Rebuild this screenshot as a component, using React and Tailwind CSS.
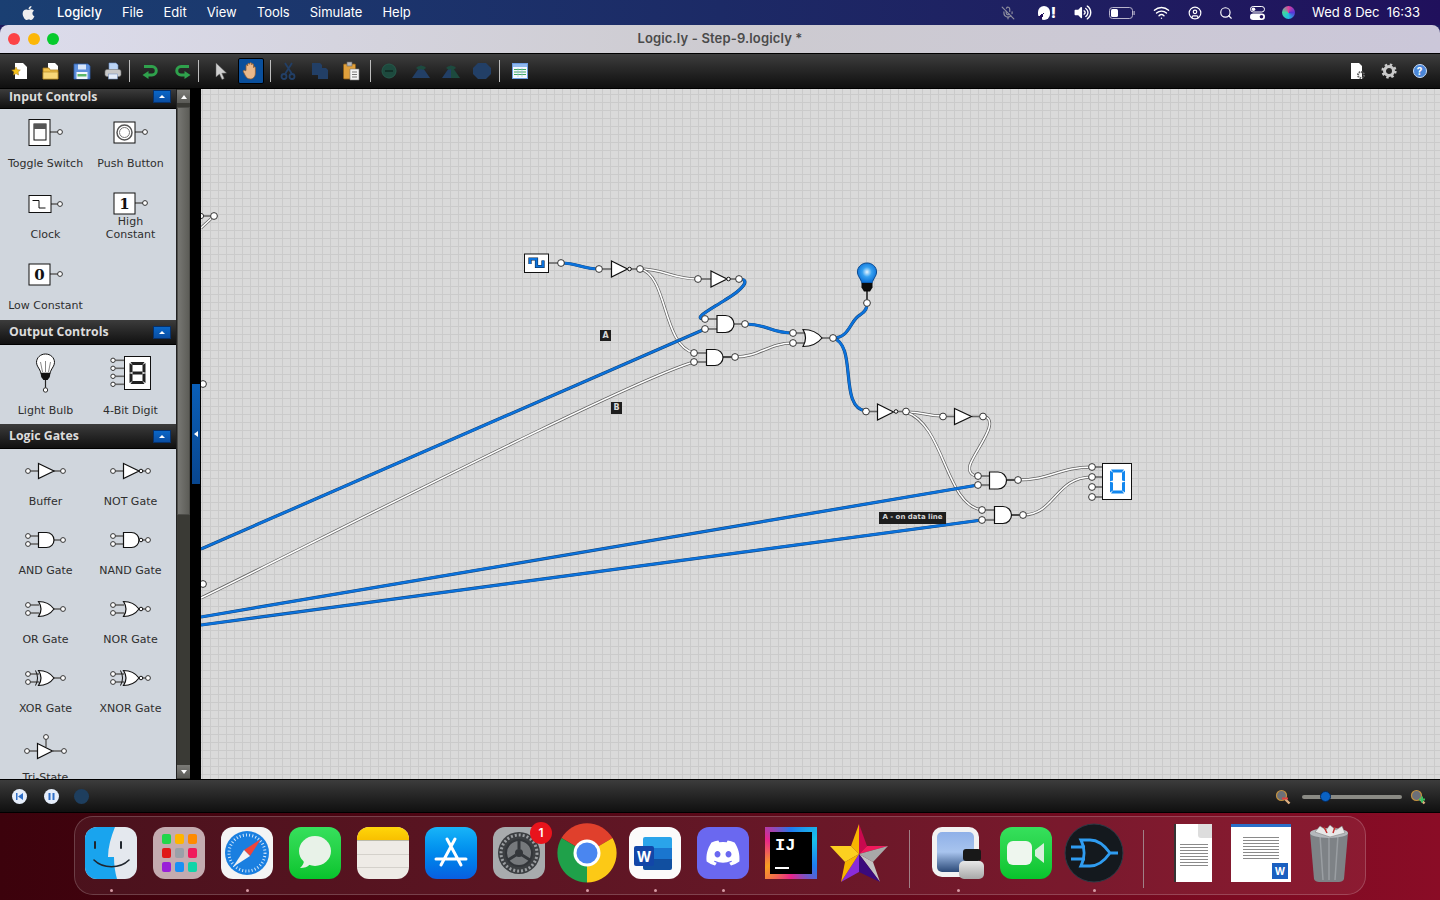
import { CircleUser, MicOff, Search, Wifi } from 'lucide-react';
import { FaApple, FaDiscord, FaVolumeUp } from 'react-icons/fa';

const dejavu = "[font-family:'DejaVu_Sans',sans-serif]";

// shared circuit pieces, coordinates are svg units
const Pin = ({ x, y, r = 3.4 }) => (
  <circle cx={x} cy={y} r={r} fill="#fff" stroke="#333" strokeWidth="1" />
);

const Stub = ({ x1, y1, x2, y2, color = '#666', w = 1.6 }) => (
  <line x1={x1} y1={y1} x2={x2} y2={y2} stroke={color} strokeWidth={w} />
);

const Wire = ({ d, on }) =>
  on ? (
    <>
      <path d={d} fill="none" stroke="#14406f" strokeWidth="3.2" />
      <path d={d} fill="none" stroke="#0b72dc" strokeWidth="2.4" />
    </>
  ) : (
    <>
      <path d={d} fill="none" stroke="#616161" strokeWidth="3" />
      <path d={d} fill="none" stroke="#fff" strokeWidth="1.6" />
    </>
  );

const Tri = ({ x, y, w = 16, h = 16 }) => (
  <polygon
    points={`${x},${y} ${x + w},${y + h / 2} ${x},${y + h}`}
    fill="#fff"
    stroke="#111"
    strokeWidth="1.2"
  />
);

const AndShape = ({ x, y, w = 17, h = 17 }) => (
  <path
    d={`M${x} ${y} H${x + w - h / 2} A${h / 2} ${h / 2} 0 0 1 ${x + w - h / 2} ${y + h} H${x} Z`}
    fill="#fff"
    stroke="#111"
    strokeWidth="1.2"
  />
);

const OrShape = ({ x, y, w = 19, h = 17 }) => (
  <path
    d={`M${x} ${y} Q${x + w * 0.65} ${y} ${x + w} ${y + h / 2} Q${x + w * 0.65} ${y + h} ${x} ${y + h} Q${x + 5} ${y + h / 2} ${x} ${y} Z`}
    fill="#fff"
    stroke="#111"
    strokeWidth="1.2"
  />
);

const Bubble = ({ x, y }) => <circle cx={x} cy={y} r="1.8" fill="#fff" stroke="#111" strokeWidth="1" />;

// palette icons, all drawn in a cell 85 wide
const PaletteGate = ({ kind }) => {
  const negated = kind.startsWith('n') || kind === 'xnor';
  const xor = kind === 'xor' || kind === 'xnor';
  const tri = kind === 'buffer' || kind === 'not';
  const andLike = kind === 'and' || kind === 'nand';
  const yc = 22;
  return (
    <svg width="85" height="46" viewBox="0 0 85 46">
      {tri ? (
        <>
          <Stub x1={25} y1={yc} x2={36} y2={yc} />
          <Pin x={25} y={yc} r={2.4} />
        </>
      ) : (
        <>
          <Stub x1={25} y1={yc - 4} x2={36} y2={yc - 4} />
          <Stub x1={25} y1={yc + 4} x2={36} y2={yc + 4} />
          <Pin x={25} y={yc - 4} r={2.4} />
          <Pin x={25} y={yc + 4} r={2.4} />
        </>
      )}
      <Stub x1={50} y1={yc} x2={60} y2={yc} />
      <Pin x={60} y={yc} r={2.4} />
      {xor && (
        <path d={`M32.5 ${yc - 7.5} Q36.5 ${yc} 32.5 ${yc + 7.5}`} fill="none" stroke="#111" strokeWidth="1" />
      )}
      {tri && <Tri x={35.5} y={yc - 7.5} w={15.5} h={15} />}
      {andLike && <AndShape x={35.5} y={yc - 7.5} w={15.5} h={15} />}
      {!tri && !andLike && <OrShape x={35.5} y={yc - 7.5} w={15.5} h={15} />}
      {negated && <Bubble x={53} y={yc} />}
    </svg>
  );
};

const TriState = () => (
  <svg width="85" height="46" viewBox="0 0 85 46">
    <Stub x1={24} y1={26} x2={36} y2={26} />
    <Stub x1={50} y1={26} x2={61} y2={26} />
    <Stub x1={43} y1={12} x2={43} y2={22} />
    <Pin x={24} y={26} r={2.4} />
    <Pin x={61} y={26} r={2.4} />
    <Pin x={43} y={12} r={2.4} />
    <Tri x={34.5} y={18.5} w={15} h={15} />
  </svg>
);

const BoxIcon = ({ children, w = 21, h = 21, y = 11, x = 26, pinY = 21 }) => (
  <svg width="85" height="46" viewBox="0 0 85 46">
    <Stub x1={x + w} y1={pinY} x2={57} y2={pinY} />
    <Pin x={57} y={pinY} r={2.4} />
    <rect x={x} y={y} width={w} height={h} fill="#fff" stroke="#111" strokeWidth="1" />
    {children}
  </svg>
);

const BulbIcon = () => (
  <svg width="85" height="59" viewBox="0 1 85 59">
    <Stub x1={42.5} y1={34} x2={42.5} y2={46} color="#222" w={1.2} />
    <Pin x={42.5} y={46} r={2.2} />
    <path
      d="M42.5 10c-5 0-9 3.7-9 8.4 0 3.5 2.6 5.6 3.8 8.8.3.8.4 1.4.4 2h9.6c0-.6.1-1.2.4-2 1.2-3.2 3.8-5.3 3.8-8.8 0-4.700-4-8.400-9-8.400z"
      fill="#fff"
      stroke="#111"
      strokeWidth="1"
    />
    <path d="M39.5 28l-2-10M45.5 28l2-10M42.5 28V17" stroke="#555" strokeWidth=".7" fill="none" />
    <path d="M37.6 29h9.8l-.6 4-2.2 3h-4.2l-2.2-3z" fill="#111" />
  </svg>
);

// 7 segment digit, mid is the middle bar colour
const SegDigit = ({ x, y, w, h, color, t = 2, mid = 'none' }) => {
  const m = y + h / 2;
  return (
    <g fill={color}>
      <polygon points={`${x + 1},${y} ${x + w - 1},${y} ${x + w - t},${y + t} ${x + t},${y + t}`} />
      <polygon points={`${x},${y + 1} ${x + t},${y + t} ${x + t},${m - 1} ${x},${m - 0.3}`} />
      <polygon points={`${x + w},${y + 1} ${x + w - t},${y + t} ${x + w - t},${m - 1} ${x + w},${m - 0.3}`} />
      <polygon points={`${x},${m + 0.3} ${x + t},${m + 1} ${x + t},${y + h - t} ${x},${y + h - 1}`} />
      <polygon points={`${x + w},${m + 0.3} ${x + w - t},${m + 1} ${x + w - t},${y + h - t} ${x + w},${y + h - 1}`} />
      <polygon points={`${x + t},${y + h - t} ${x + w - t},${y + h - t} ${x + w - 1},${y + h} ${x + 1},${y + h}`} />
      <rect x={x + t} y={m - t / 2} width={w - 2 * t} height={t} fill={mid} />
    </g>
  );
};

const DigitIcon = () => (
  <svg width="85" height="59" viewBox="0 1 85 59">
    {[16.3, 24.3, 32.3, 40.3].map((py) => (
      <g key={py}>
        <Stub x1={25} y1={py} x2={36} y2={py} />
        <Pin x={25} y={py} r={2.2} />
      </g>
    ))}
    <rect x={36.5} y={12.5} width={26} height={33} fill="#fff" stroke="#111" strokeWidth="1" />
    <SegDigit x={41.5} y={18} w={16} h={22} color="#222" t={3} mid="#222" />
  </svg>
);

const PaletteItem = ({ label, icon, rowClass = 'h-[69px]', labelClass = '' }) => (
  <div className={`flex flex-col items-center ${rowClass}`}>
    {icon}
    <div className={`text-center text-[11px] leading-[13px] text-[#2e2e2e] ${labelClass}`}>{label}</div>
  </div>
);

const SectionHeader = ({ title, className = 'h-[25px]' }) => (
  <div
    className={`flex shrink-0 items-center justify-between border-b border-black bg-gradient-to-b from-[#3c3c3c] to-[#111] pl-[9px] pr-[5px] ${className}`}
  >
    <span className="text-[12.3px] leading-[14px] font-bold text-[#dcdcdc] [font-family:'Open_Sans',sans-serif]">{title}</span>
    <span className="flex h-[13px] w-[18px] items-center justify-center border border-[#06316b] bg-gradient-to-b from-[#0a67c8] to-[#0a4ea3]">
      <span className="h-0 w-0 border-x-[3px] border-b-[3px] border-x-transparent border-b-white" />
    </span>
  </div>
);

const Sidebar = () => (
  <aside className={`flex w-[177px] shrink-0 flex-col overflow-hidden border-r border-[#222] bg-[#d0d6dd] ${dejavu}`}>
    <SectionHeader title="Input Controls" className="h-[20px] pb-[4px]" />
    <div className="grid h-[211px] shrink-0 grid-cols-[85px_85px] content-start overflow-hidden pt-[2px] pl-[3px]">
      <PaletteItem
        rowClass="h-[71px]"
        label="Toggle Switch"
        icon={
          <BoxIcon y={8.5} h={26} pinY={21}>
            <rect x={31} y={13} width={12} height={16} fill="#fff" stroke="#111" />
            <rect x={31} y={13} width={12} height={5} fill="#555" />
          </BoxIcon>
        }
      />
      <PaletteItem
        rowClass="h-[71px]"
        label="Push Button"
        icon={
          <BoxIcon>
            <circle cx={36.5} cy={21.5} r={7.5} fill="#fff" stroke="#555" strokeWidth="1.5" />
            <circle cx={36.5} cy={21.5} r={5} fill="#fff" stroke="#777" strokeWidth="1" />
          </BoxIcon>
        }
      />
      <PaletteItem
        rowClass="h-[71px]"
        label="Clock"
        icon={
          <BoxIcon y={13.5} h={17} w={22} pinY={22}>
            <path d="M29.5 18.500h6.500v7.500h6.500" fill="none" stroke="#111" strokeWidth="1" />
          </BoxIcon>
        }
      />
      <PaletteItem
        rowClass="h-[71px]"
        labelClass="-mt-[13px]"
        label={
          <>
            High
            <br />
            Constant
          </>
        }
        icon={
          <BoxIcon>
            <text x={36.5} y={27} textAnchor="middle" fontSize="15" fontWeight="700" fontFamily="'DejaVu Serif', serif" fill="#111">
              1
            </text>
          </BoxIcon>
        }
      />
      <PaletteItem
        rowClass="h-[71px]"
        label="Low Constant"
        icon={
          <BoxIcon>
            <text x={36.5} y={27} textAnchor="middle" fontSize="15" fontWeight="700" fontFamily="'DejaVu Serif', serif" fill="#111">
              0
            </text>
          </BoxIcon>
        }
      />
    </div>
    <SectionHeader title="Output Controls" />
    <div className="grid h-[79px] shrink-0 grid-cols-[85px_85px] pl-[3px]">
      <PaletteItem rowClass="h-[79px]" label="Light Bulb" icon={<BulbIcon />} />
      <PaletteItem rowClass="h-[79px]" label="4-Bit Digit" icon={<DigitIcon />} />
    </div>
    <SectionHeader title="Logic Gates" />
    <div className="grid shrink-0 grid-cols-[85px_85px] pl-[3px]">
      <PaletteItem label="Buffer" icon={<PaletteGate kind="buffer" />} />
      <PaletteItem label="NOT Gate" icon={<PaletteGate kind="not" />} />
      <PaletteItem label="AND Gate" icon={<PaletteGate kind="and" />} />
      <PaletteItem label="NAND Gate" icon={<PaletteGate kind="nand" />} />
      <PaletteItem label="OR Gate" icon={<PaletteGate kind="or" />} />
      <PaletteItem label="NOR Gate" icon={<PaletteGate kind="nor" />} />
      <PaletteItem label="XOR Gate" icon={<PaletteGate kind="xor" />} />
      <PaletteItem label="XNOR Gate" icon={<PaletteGate kind="xnor" />} />
      <PaletteItem label="Tri-State" icon={<TriState />} />
    </div>
  </aside>
);

const ScrollButton = ({ up }) => (
  <div className="flex h-[13px] shrink-0 items-center justify-center bg-gradient-to-b from-[#7c7c78] to-[#5a5a56]">
    <span
      className={
        up
          ? 'h-0 w-0 border-x-[3px] border-b-[4px] border-x-transparent border-b-white'
          : 'h-0 w-0 border-x-[3px] border-t-[4px] border-x-transparent border-t-white'
      }
    />
  </div>
);

const Scrollbar = () => (
  <div className="flex w-[13px] shrink-0 flex-col bg-[#3a3a35] pt-[1px] pb-[1px]">
    <ScrollButton up />
    <div className="mt-[4px] h-[408px] shrink-0 border border-[#4c4c48] bg-gradient-to-r from-[#777773] to-[#5d5d58]" />
    <div className="flex-1" />
    <ScrollButton />
  </div>
);

const CollapseGutter = () => (
  <div className="flex w-[11px] shrink-0 flex-col bg-black pt-[295px] pl-[2px]">
    <div className="flex h-[100px] w-[8px] items-center justify-center bg-gradient-to-b from-[#0a5fb8] to-[#08468f]">
      <span className="h-0 w-0 border-y-[3px] border-r-[4px] border-y-transparent border-r-white" />
    </div>
  </div>
);

const Circuit = () => (
  <svg className="absolute inset-0" width="1239" height="690" viewBox="201 89 1239 690">
    {/* off the left edge */}
    <Stub x1={201} y1={216} x2={214} y2={216} />
    <Wire d="M214 216 L201 228" />
    <Pin x={214} y={216} />
    <Pin x={201} y={216} r={2.6} />
    <Pin x={203} y={384} />
    <Pin x={203} y={584} />

    {/* wires */}
    <Wire on d="M561 263 C578 263 582 269 599 269" />
    <Wire d="M640 269 C665 269 672 279 698 279" />
    <Wire d="M640 269 C668 275 662 345 694 353" />
    <Wire on d="M739 279 C752 279 742 290 725 300 C708 311 692 319 705 319" />
    <Wire on d="M705 329 L201 549" />
    <Wire d="M694 362 C630 380 300 550 201 598" />
    <Wire on d="M745 324 C768 324 770 333 793 333" />
    <Wire d="M735 357 C760 357 768 343 793 343" />
    <Wire on d="M833 338 C850 338 850 320 860 315 C866 311 867 308 867 303" />
    <Wire on d="M833 338 C858 345 838 408 866 411" />
    <Wire d="M906 412 C925 412 925 416 943 416" />
    <Wire d="M906 412 C945 425 945 505 982 510" />
    <Wire d="M983 416 C1002 420 975 450 970 465 C968 472 972 476 978 476" />
    <Wire on d="M978 485 L201 617" />
    <Wire on d="M982 520 L201 625" />
    <Wire d="M1018 480 C1050 480 1060 467 1092 467" />
    <Wire d="M1023 515 C1055 515 1055 477 1092 477" />

    {/* clock */}
    <Stub x1={549} y1={263} x2={561} y2={263} />
    <rect x={524.5} y={254} width={24} height={18.5} fill="#fff" stroke="#111" strokeWidth="1" />
    <path d="M530 264v-5h6.500v7.500h6.500v-6" fill="none" stroke="#12243c" strokeWidth="3.200" />
    <path d="M530 264v-5h6.500v7.500h6.500v-6" fill="none" stroke="#0b72dc" strokeWidth="2.200" />

    {/* top inverters */}
    <Stub x1={599} y1={269} x2={611} y2={269} />
    <Stub x1={630} y1={269} x2={640} y2={269} />
    <Tri x={611.5} y={261} />
    <Bubble x={629.5} y={269} />
    <Stub x1={698} y1={279} x2={711} y2={279} />
    <Stub x1={730} y1={279} x2={739} y2={279} />
    <Tri x={711} y={271} />
    <Bubble x={728.5} y={279} />

    {/* and + or row */}
    <Stub x1={705} y1={319} x2={717} y2={319} />
    <Stub x1={705} y1={329} x2={717} y2={329} />
    <Stub x1={734} y1={324} x2={745} y2={324} />
    <AndShape x={717} y={315.5} />
    <Stub x1={694} y1={353} x2={707} y2={353} />
    <Stub x1={694} y1={362} x2={707} y2={362} />
    <Stub x1={723} y1={357} x2={735} y2={357} color="#222" />
    <AndShape x={706.5} y={349.5} w={16.5} h={16} />
    <Stub x1={793} y1={333} x2={806} y2={333} />
    <Stub x1={793} y1={343} x2={806} y2={343} />
    <Stub x1={822} y1={338} x2={833} y2={338} />
    <OrShape x={803} y={329.5} />

    {/* bulb */}
    <Stub x1={867} y1={290} x2={867} y2={303} color="#222" />
    <defs>
      <radialGradient id="glow" cx="50%" cy="45%" r="55%">
        <stop offset="0%" stopColor="#e8f6ff" />
        <stop offset="45%" stopColor="#35a0f0" />
        <stop offset="100%" stopColor="#0a6dd4" />
      </radialGradient>
    </defs>
    <path
      d="M867 263c-5.400 0-9.600 4-9.600 9 0 3.600 2.700 6 3.900 9.300.3.800.4 1.400.4 1.700h10.600c0-.3.1-.9.4-1.700 1.200-3.300 3.900-5.700 3.900-9.300 0-5-4.200-9-9.600-9z"
      fill="url(#glow)"
      stroke="#0a4a90"
      strokeWidth="1"
    />
    <path d="M861.500 283h11v4.500l-2.500 4h-6l-2.500-4z" fill="#0b0b0b" />

    {/* lower inverters */}
    <Stub x1={866} y1={411.5} x2={877} y2={411.5} />
    <Stub x1={897} y1={411.5} x2={906} y2={411.5} />
    <Tri x={877.5} y={404} />
    <Bubble x={896} y={411.5} />
    <Stub x1={943} y1={416.5} x2={955} y2={416.5} />
    <Stub x1={972} y1={416.5} x2={983} y2={416.5} />
    <Tri x={954.5} y={408.5} w={17} />

    {/* lower ands */}
    <Stub x1={978} y1={476} x2={990} y2={476} />
    <Stub x1={978} y1={485} x2={990} y2={485} />
    <Stub x1={1007} y1={480} x2={1018} y2={480} color="#222" />
    <AndShape x={989.5} y={472} />
    <Stub x1={982} y1={510} x2={995} y2={510} />
    <Stub x1={982} y1={520} x2={995} y2={520} />
    <Stub x1={1011} y1={515} x2={1023} y2={515} color="#222" />
    <AndShape x={994.5} y={506.5} />

    {/* 4 bit digit */}
    {[467, 477, 487, 497].map((py) => (
      <Stub key={py} x1={1092} y1={py} x2={1103} y2={py} />
    ))}
    <rect x={1102.5} y={463.5} width={29} height={36} fill="#fff" stroke="#111" strokeWidth="1" />
    <SegDigit x={1110} y={469.5} w={15} h={24} color="#1387ee" t={3} />

    {[
      [561, 263], [599, 269], [640, 269], [698, 279], [739, 279],
      [705, 319], [705, 329], [745, 324], [694, 353], [694, 362],
      [735, 357], [793, 333], [793, 343], [833, 338], [867, 303],
      [866, 411.5], [906, 411.5], [943, 416.5], [983, 416.5],
      [978, 476], [978, 485], [1018, 480], [982, 510], [982, 520], [1023, 515],
      [1092, 467], [1092, 477], [1092, 487], [1092, 497],
    ].map(([x, y]) => (
      <Pin key={`${x}-${y}`} x={x} y={y} />
    ))}
  </svg>
);

const Tag = ({ className, children }) => (
  <div
    className={`absolute bg-[#1e1e1e] text-center leading-[11px] font-bold whitespace-nowrap text-[#d8d8d8] ${dejavu} ${className}`}
  >
    {children}
  </div>
);

const Canvas = () => (
  <main className="relative flex-1 overflow-hidden bg-[#dadada] bg-[linear-gradient(to_right,#cbcbcb_1px,transparent_1px),linear-gradient(to_bottom,#cbcbcb_1px,transparent_1px)] bg-[size:8px_8px] bg-[position:1px_5px]">
    <Circuit />
    <Tag className="top-[241px] left-[399px] h-[11px] w-[11px] text-[8px]">A</Tag>
    <Tag className="top-[313px] left-[410px] h-[12px] w-[11px] text-[8px]">B</Tag>
    <Tag className="top-[423px] left-[678px] h-[12px] w-[67px] text-[7px]">A - on data line</Tag>
  </main>
);

// toolbar drawings
const NewDoc = () => (
  <svg width="20" height="20" viewBox="0 0 20 20">
    <path d="M5 2h8l4 4v12H5z" fill="#fff" />
    <path d="M6 6l1.300 2.700 3 .4-2.200 2 .5 2.900L6 12.600 3.400 14l.5-2.900-2.200-2 3-.4z" fill="#f6c21c" stroke="#a87a10" strokeWidth=".5" />
  </svg>
);
const OpenDoc = () => (
  <svg width="20" height="20" viewBox="0 0 20 20">
    <path d="M7 2h7l3 3v8H7z" fill="#fff" />
    <path d="M2 7h6l1 2h8v9H2z" fill="#f0c04a" stroke="#a87c1c" strokeWidth=".8" />
    <path d="M2 11h15v7H2z" fill="#f8d778" stroke="#a87c1c" strokeWidth=".6" />
  </svg>
);
const SaveDoc = () => (
  <svg width="20" height="20" viewBox="0 0 20 20">
    <path d="M2 3h14l2 2v13H2z" fill="#5d8fdc" stroke="#2f5fb0" strokeWidth=".8" />
    <rect x="6" y="3.500" width="8" height="5" fill="#d8e6fa" />
    <rect x="4.500" y="11" width="11" height="7" fill="#f2f6fc" />
    <rect x="5.500" y="13" width="9" height="2.500" fill="#5ab86a" />
  </svg>
);
const PrintDoc = () => (
  <svg width="20" height="20" viewBox="0 0 20 20">
    <path d="M6 2h7l2 2v6H6z" fill="#bcd4f5" stroke="#6f94cc" strokeWidth=".6" />
    <rect x="2" y="8.500" width="16" height="7" rx="2" fill="#c8c8c8" stroke="#777" strokeWidth=".6" />
    <rect x="5.500" y="13" width="9" height="5" fill="#e4ecf8" stroke="#7793bf" strokeWidth=".6" />
  </svg>
);
const UndoIcon = ({ flip }) => (
  <svg width="20" height="20" viewBox="0 0 20 20" className={flip ? '-scale-x-100' : ''}>
    <path d="M4 5.500h8a4.200 4.200 0 0 1 0 8.500H7" fill="none" stroke="#2fa14c" strokeWidth="3" />
    <path d="M8.500 10v8L2.500 14z" fill="#2fa14c" />
  </svg>
);
const ArrowIcon = () => (
  <svg width="14" height="20" viewBox="0 0 14 20">
    <path d="M2 2v14l3.500-3 2.500 5.500 2.200-1-2.400-5.300 4.700-.2z" fill="#d0d0d0" stroke="#666" strokeWidth=".5" />
  </svg>
);
const HandIcon = () => (
  <svg width="18" height="20" viewBox="0 0 18 20">
    <path
      d="M4 9.500V4.800c0-1.300 1.700-1.300 1.700 0V3.300c0-1.300 2-1.300 2 0v-.6c0-1.300 2-1.300 2 0v1.100c0-1.300 1.900-1.300 1.900 0v2.800c0-1.200 1.800-1.200 1.800 0V12c0 3.500-2 6-5 6-2.600 0-4-1.200-5-3.200L1.300 10.800c-.7-1.300.9-2.200 1.800-1.100z"
      fill="#eab88a"
      stroke="#8a5a32"
      strokeWidth=".8"
    />
  </svg>
);
const CutIcon = () => (
  <svg width="16" height="20" viewBox="0 0 16 20" fill="none" stroke="#223f66" strokeWidth="1.800">
    <path d="M12 2L5 13M5 2l7 11" />
    <circle cx="4" cy="15.500" r="2.500" />
    <circle cx="12" cy="15.500" r="2.500" />
  </svg>
);
const CopyIcon = () => (
  <svg width="18" height="18" viewBox="0 0 18 18" fill="#223f66">
    <path d="M1 1h8l2 2v10H1z" />
    <path d="M7 6h8l2 2v9H7z" />
  </svg>
);
const PasteIcon = () => (
  <svg width="18" height="20" viewBox="0 0 18 20">
    <rect x="1.500" y="3" width="12" height="15" rx="1" fill="#e0a03c" stroke="#8a5c14" strokeWidth=".8" />
    <rect x="5" y="1" width="5" height="4" fill="#b8b8b8" stroke="#666" strokeWidth=".6" />
    <path d="M8 8h9v11H8z" fill="#f4f4f4" stroke="#777" strokeWidth=".6" />
    <path d="M10 11h5M10 13.500h5M10 16h5" stroke="#777" />
  </svg>
);
const DimCircle = () => (
  <svg width="18" height="18" viewBox="0 0 18 18">
    <circle cx="9" cy="9" r="7" fill="#1d4a3e" stroke="#25594a" />
    <rect x="5" y="8" width="8" height="2" fill="#123028" />
  </svg>
);
const DimMount = ({ tint }) => (
  <svg width="20" height="18" viewBox="0 0 20 18">
    <path d="M1 16L10 3v13z" fill="#223f66" />
    <path d="M19 16L10 3v13z" fill={tint} />
    <path d="M5 6c3-3 8-3 10 0l-3 2c-1-1-3-1-4 0z" fill="#1d4a3e" />
  </svg>
);
const DimHex = () => (
  <svg width="18" height="18" viewBox="0 0 18 18">
    <polygon points="5,1 13,1 18,6 18,12 13,17 5,17 0,12 0,6" fill="#223f66" />
  </svg>
);
const TableIcon = () => (
  <svg width="16" height="16" viewBox="0 0 16 16">
    <rect x=".5" y=".5" width="15" height="15" fill="#f2f7fd" stroke="#6a9ae0" />
    <rect x="1" y="1" width="14" height="3" fill="#8fb8ee" />
    <path d="M2 6.500h12M2 9h12M2 11.500h12" stroke="#3fa860" strokeWidth="1" />
    <path d="M6 5v9M10 5v9" stroke="#9cb8dc" strokeWidth=".6" />
  </svg>
);
const GearDoc = () => (
  <svg width="18" height="18" viewBox="0 0 18 18">
    <path d="M2 1h8l3 3v13H2z" fill="#fff" />
    <circle cx="12" cy="13" r="3" fill="none" stroke="#666" strokeWidth="2" strokeDasharray="1.500 .8" />
  </svg>
);
const Gear = () => (
  <svg width="16" height="16" viewBox="0 0 16 16">
    <circle cx="8" cy="8" r="4.500" fill="none" stroke="#c9c9c9" strokeWidth="3" />
    <circle cx="8" cy="8" r="6.300" fill="none" stroke="#c9c9c9" strokeWidth="2.600" strokeDasharray="2.400 2.550" />
  </svg>
);
const HelpIcon = () => (
  <span className="flex h-[14px] w-[14px] items-center justify-center rounded-full border border-[#c8dcf8] bg-[#4a86d8] text-[10px] leading-none font-bold text-white">
    ?
  </span>
);

const ToolSep = () => <span className="mx-[1px] h-[22px] w-px shrink-0 bg-[#bdbdbd]" />;

const ToolSlot = ({ className = 'w-[31px]', children }) => (
  <span className={`flex h-[26px] shrink-0 items-center justify-center ${className}`}>{children}</span>
);

const Toolbar = () => (
  <div className="flex h-[36px] shrink-0 items-center border-y border-y-black bg-gradient-to-b from-[#3e3e3e] to-[#0f0f0f] pl-[4px]">
    <ToolSlot><NewDoc /></ToolSlot>
    <ToolSlot><OpenDoc /></ToolSlot>
    <ToolSlot><SaveDoc /></ToolSlot>
    <ToolSlot><PrintDoc /></ToolSlot>
    <ToolSep />
    <ToolSlot className="w-[37px]"><UndoIcon /></ToolSlot>
    <ToolSlot className="w-[29px]"><UndoIcon flip /></ToolSlot>
    <ToolSep />
    <ToolSlot className="w-[38px] pl-[4px]"><ArrowIcon /></ToolSlot>
    <span className="flex h-[26px] w-[26px] shrink-0 items-center justify-center rounded-[2px] border border-black bg-[#0a4f9c]">
      <HandIcon />
    </span>
    <span className="w-[5px]" />
    <ToolSep />
    <ToolSlot className="w-[32px]"><CutIcon /></ToolSlot>
    <ToolSlot><CopyIcon /></ToolSlot>
    <ToolSlot><PasteIcon /></ToolSlot>
    <span className="w-[3px]" />
    <ToolSep />
    <ToolSlot className="w-[34px]"><DimCircle /></ToolSlot>
    <ToolSlot className="w-[29px]"><DimMount tint="#223f66" /></ToolSlot>
    <ToolSlot><DimMount tint="#1d4a3e" /></ToolSlot>
    <ToolSlot><DimHex /></ToolSlot>
    <span className="w-[1px]" />
    <ToolSep />
    <ToolSlot className="w-[38px]"><TableIcon /></ToolSlot>
    <div className="ml-auto flex items-center pr-[5px]">
      <ToolSlot><GearDoc /></ToolSlot>
      <ToolSlot><Gear /></ToolSlot>
      <ToolSlot><HelpIcon /></ToolSlot>
    </div>
  </div>
);

const RoundBtn = ({ children }) => (
  <span className="flex h-[15px] w-[15px] items-center justify-center rounded-full bg-[#e6eefb] text-[#2f6fc8]">
    {children}
  </span>
);

const Magnifier = ({ plus }) => (
  <svg width="16" height="16" viewBox="0 0 16 16">
    <path d="M9.500 9.500l5 5" stroke="#e0b080" strokeWidth="2.400" />
    <circle cx="6.500" cy="6.500" r="5" fill="#6c7078" stroke="#c09040" strokeWidth="1.200" />
    {plus ? (
      <path d="M9 10.500h6M12 7.500v6" stroke="#3cc060" strokeWidth="2" />
    ) : (
      <path d="M7 9.500h6" stroke="#e04040" strokeWidth="2" />
    )}
  </svg>
);

const BottomBar = () => (
  <div className="flex h-[34px] shrink-0 items-center border-y border-y-black bg-gradient-to-b from-[#3c3c3c] to-[#101010] pt-[1px] pl-[12px]">
    <RoundBtn>
      <svg width="9" height="9" viewBox="0 0 9 9" fill="currentColor">
        <rect x="1" y="1" width="1.500" height="7" />
        <path d="M8 1v7L3 4.500z" />
      </svg>
    </RoundBtn>
    <span className="ml-[17px]">
      <RoundBtn>
        <svg width="9" height="9" viewBox="0 0 9 9" fill="currentColor">
          <rect x="1.500" y="1" width="2" height="7" />
          <rect x="5.500" y="1" width="2" height="7" />
        </svg>
      </RoundBtn>
    </span>
    <span className="ml-[15px] h-[15px] w-[15px] rounded-full bg-[#1e3e5e]" />
    <div className="ml-auto flex items-center pr-[14px]">
      <Magnifier />
      <div className="relative mr-[8px] ml-[11px] h-[4px] w-[100px] rounded-full bg-[#8a8a84]">
        <span className="absolute top-[-4px] left-[18px] h-[11px] w-[11px] rounded-full border border-[#052a5c] bg-[#0a62c4]" />
      </div>
      <Magnifier plus />
    </div>
  </div>
);

// dock
const Tile = ({ className = '', children }) => (
  <div className={`flex h-[52px] w-[52px] items-center justify-center overflow-hidden rounded-[12px] ${className}`}>
    {children}
  </div>
);

const Finder = () => (
  <Tile className="relative bg-[#e4e8ee]">
    <svg width="52" height="52" viewBox="0 0 52 52">
      <path d="M0 0h30c-4 10-7 20-7 30h6c0 8 1 15 3 22H0z" fill="#19a4ee" />
      <path d="M10 15v6M36 15v6" stroke="#20262e" strokeWidth="2" strokeLinecap="round" />
      <path d="M9 33c9 9 26 9 35 0" fill="none" stroke="#20262e" strokeWidth="1.600" strokeLinecap="round" />
    </svg>
  </Tile>
);

const Launchpad = () => {
  const dots = ['#22d64a', '#ffb400', '#ff8a00', '#e01818', '#9aa0a8', '#f01a5c', '#9a20d8', '#1a90f4', '#10d4a8'];
  return (
    <Tile className="bg-[#c4abb0]">
      <div className="grid grid-cols-3 gap-[4px]">
        {dots.map((c) => (
          <span key={c} className="h-[10px] w-[9px] rounded-[2px]" style={{ backgroundColor: c }} />
        ))}
      </div>
    </Tile>
  );
};

const Safari = () => (
  <Tile className="bg-[#f4f4f4]">
    <svg width="46" height="46" viewBox="0 0 46 46">
      <circle cx="23" cy="23" r="22" fill="#1a7fe0" />
      <circle cx="23" cy="23" r="18" fill="none" stroke="#d4e8fb" strokeWidth="3" strokeDasharray="1 2.200" />
      <polygon points="37,9 26,26 20,20" fill="#f0453a" />
      <polygon points="9,37 26,26 20,20" fill="#f2f2f2" />
    </svg>
  </Tile>
);

const Messages = () => (
  <Tile className="bg-gradient-to-b from-[#36e05c] to-[#06c42c]">
    <svg width="40" height="40" viewBox="0 0 40 40">
      <ellipse cx="20" cy="18" rx="16" ry="15" fill="#e8f2e8" />
      <path d="M9 27c0 4-2 6-4 8 4 0 8-1 10-4z" fill="#e8f2e8" />
    </svg>
  </Tile>
);

const Notes = () => (
  <Tile className="flex-col justify-start bg-[#eeebe6]">
    <div className="h-[14px] w-full shrink-0 border-b border-[#bba] bg-gradient-to-b from-[#ffd60a] to-[#f8c000]" />
    <div className="mt-[13px] h-px w-full bg-[#d4d1cb]" />
    <div className="mt-[12px] h-px w-full bg-[#d4d1cb]" />
  </Tile>
);

const AppStore = () => (
  <Tile className="bg-gradient-to-b from-[#18b4f8] to-[#0a5ee0]">
    <svg width="40" height="40" viewBox="0 0 40 40" fill="none" stroke="#fff" strokeWidth="3" strokeLinecap="round">
      <path d="M24 6L10 32M16 6l14 26M5 26h30" />
    </svg>
  </Tile>
);

const Prefs = () => (
  <Tile className="relative bg-[#a8abad]">
    <svg width="48" height="48" viewBox="0 0 48 48">
      <circle cx="24" cy="24" r="21" fill="#3c3f42" />
      <circle cx="24" cy="24" r="18" fill="none" stroke="#9a9da0" strokeWidth="3" strokeDasharray="2 2" />
      <circle cx="24" cy="24" r="13" fill="#76797c" stroke="#33363a" strokeWidth="2" />
      <circle cx="24" cy="24" r="4" fill="#33363a" />
      <path d="M24 11v9M13 31l8-5M35 31l-8-5" stroke="#33363a" strokeWidth="3" />
    </svg>
  </Tile>
);

const Chrome = () => (
  <svg width="60" height="60" viewBox="0 0 60 60" className="-mx-[4px] -my-[4px] shrink-0">
    <path d="M30 30L55.500 15A29.500 29.500 0 0 0 4.500 15z" fill="#e0402c" />
    <path d="M30 30L4.500 15A29.500 29.500 0 0 0 30 59.500z" fill="#1fa14a" />
    <path d="M30 30L30 59.500A29.500 29.500 0 0 0 55.500 15z" fill="#fcc916" />
    <circle cx="30" cy="30" r="13.500" fill="#fff" />
    <circle cx="30" cy="30" r="10.500" fill="#4a86f0" />
  </svg>
);

const Word = () => (
  <Tile className="relative bg-[#fbfbfb]">
    <div className="absolute top-[10px] left-[14px] flex h-[33px] w-[29px] flex-col overflow-hidden rounded-[2px]">
      <span className="flex-1 bg-[#2aa4ea]" />
      <span className="flex-1 bg-[#1a76cf]" />
      <span className="flex-1 bg-[#114fa0]" />
    </div>
    <div className="absolute top-[19px] left-[5px] flex h-[20px] w-[20px] items-center justify-center rounded-[2px] bg-[#1246a8] text-[14px] font-bold text-white">
      W
    </div>
  </Tile>
);

const Discord = () => (
  <Tile className="bg-[#6a68f0]">
    <FaDiscord className="h-[36px] w-[36px] text-white" />
  </Tile>
);

const IntelliJ = () => (
  <div className="flex h-[52px] w-[52px] items-center justify-center bg-[conic-gradient(#1e7bf0,#18c0e8,#1e7bf0,#e8248c,#f8a020,#e8248c,#1e7bf0)]">
    <div className="flex h-[42px] w-[42px] flex-col justify-between bg-black p-[5px]">
      <span className="text-[17px] leading-[17px] font-bold text-white [font-family:'Liberation_Mono',monospace]">IJ</span>
      <span className="h-[2px] w-[14px] bg-white" />
    </div>
  </div>
);

const Star = () => (
  <svg width="60" height="60" viewBox="0 0 60 60" className="-m-[4px] shrink-0">
    <polygon points="30,1 30,31 22,23" fill="#f7b500" />
    <polygon points="30,1 38,23 30,31" fill="#c9094f" />
    <polygon points="59,23 38,23 30,31" fill="#f01a5c" />
    <polygon points="59,23 30,31 44,39" fill="#a8a8a8" />
    <polygon points="44,39 30,31 51,59" fill="#c4c4c4" />
    <polygon points="30,31 30,49 51,59" fill="#3a0a7c" />
    <polygon points="30,31 30,49 12,59" fill="#8a2cd8" />
    <polygon points="30,31 16,39 12,59" fill="#f7b500" />
    <polygon points="1,23 22,23 30,31 16,39" fill="#fcd020" />
  </svg>
);

const Preview = () => (
  <div className="relative h-[52px] w-[52px]">
    <div className="h-[50px] w-[47px] rounded-[10px] bg-[#f2f2f2] p-[5px]">
      <div className="h-full rounded-[5px] bg-gradient-to-b from-[#8fb0e8] via-[#a8c4ee] to-[#2c4a78]" />
    </div>
    <div className="absolute right-0 bottom-0 flex h-[30px] w-[25px] flex-col items-center">
      <span className="h-[12px] w-[18px] rounded-[3px] bg-[#181818]" />
      <span className="h-[18px] w-[25px] rounded-[5px] bg-gradient-to-b from-[#e8e8e8] to-[#a8a8a8]" />
    </div>
  </div>
);

const FaceTime = () => (
  <Tile className="bg-gradient-to-b from-[#36e05c] to-[#06c42c]">
    <svg width="40" height="28" viewBox="0 0 40 28">
      <rect x="1" y="2" width="25" height="24" rx="6" fill="#eef6ee" />
      <path d="M29 11l9-7v20l-9-7z" fill="#d8eedc" />
    </svg>
  </Tile>
);

const LogiclyIcon = () => (
  <svg width="60" height="60" viewBox="0 0 60 60" className="-m-[4px] shrink-0">
    <circle cx="30" cy="30" r="29" fill="#14191e" stroke="#2c3a46" strokeWidth="1" />
    <path
      d="M7 24h14M7 36h14M17 17h9c9 0 15 6 20 13-5 7-11 13-20 13h-9c4-8 4-18 0-26zM46 30h8"
      fill="none"
      stroke="#2f9cf0"
      strokeWidth="3"
    />
  </svg>
);

const DocThumb = ({ word }) => (
  <div className={`relative h-[58px] shrink-0 bg-white ${word ? '-mx-[4px] w-[60px]' : 'w-[38px] border-l-2 border-l-[#333]'}`}>
    {word && <div className="h-[3px] w-full bg-[#2a6fc8]" />}
    <div className={`flex flex-col gap-[2px] ${word ? 'px-[12px] pt-[10px]' : 'px-[4px] pt-[20px]'}`}>
      {[0, 1, 2, 3, 4, 5, 6, 7].map((i) => (
        <span key={i} className="h-px w-full bg-[#8a8a8a]" />
      ))}
    </div>
    {word ? (
      <div className="absolute right-[3px] bottom-[3px] flex h-[16px] w-[16px] items-center justify-center bg-[#1a5fc0] text-[10px] font-bold text-white">
        W
      </div>
    ) : (
      <div className="absolute top-0 right-0 h-[14px] w-[14px] rounded-bl-[3px] bg-[#ddd]" />
    )}
  </div>
);

const Trash = () => (
  <svg width="44" height="60" viewBox="0 0 44 60" className="-my-[5px] shrink-0">
    <path d="M3 10h38l-4 46c-.5 2-3 3-5 3H12c-2 0-4.500-1-5-3z" fill="#7e8286" />
    <path d="M13 12l3 45M22 12v45M31 12l-3 45" stroke="#9a9ea2" strokeWidth="1.500" />
    <ellipse cx="22" cy="10" rx="19" ry="5" fill="#b4b8bc" />
    <path d="M8 9l5-6 6 4 4-5 6 5 6-4 3 7-15 4z" fill="#e8e8e8" stroke="#777" strokeWidth=".5" />
    <path d="M17 4l3 6M28 4l-2 6" stroke="#c03030" strokeWidth="1.500" />
  </svg>
);

const DockItem = ({ dot, children }) => (
  <div className="flex w-[52px] shrink-0 flex-col items-center">
    <div className="flex h-[52px] w-[52px] items-center justify-center">{children}</div>
    {dot && <span className="mt-[10px] h-[3px] w-[3px] rounded-full bg-[#d69aa4]" />}
  </div>
);

const DockSep = ({ className }) => <span className={`mt-[3px] h-[58px] w-px shrink-0 bg-[#a08086] ${className}`} />;

const Dock = () => (
  <div className="h-[87px] shrink-0 bg-gradient-to-r from-[#3c020c] via-[#5a0818] to-[#8a0c26] pt-[3px]">
    <div className="mx-[74px] flex h-[79px] gap-[16px] rounded-[19px] border border-[#ffffff30] bg-[#ffffff10] pt-[10px] pl-[10px]">
      <DockItem dot><Finder /></DockItem>
      <DockItem><Launchpad /></DockItem>
      <DockItem dot><Safari /></DockItem>
      <DockItem><Messages /></DockItem>
      <DockItem><Notes /></DockItem>
      <DockItem><AppStore /></DockItem>
      <div className="relative">
        <DockItem><Prefs /></DockItem>
        <span className="absolute -top-[5px] -right-[7px] flex h-[22px] w-[22px] items-center justify-center rounded-full bg-[#e8141c] text-[12px] font-semibold text-white">
          1
        </span>
      </div>
      <DockItem dot><Chrome /></DockItem>
      <DockItem dot><Word /></DockItem>
      <DockItem dot><Discord /></DockItem>
      <DockItem><IntelliJ /></DockItem>
      <DockItem><Star /></DockItem>
      <DockSep className="mr-[6px] ml-[8px]" />
      <DockItem dot><Preview /></DockItem>
      <DockItem><FaceTime /></DockItem>
      <DockItem dot><LogiclyIcon /></DockItem>
      <DockSep className="mr-[7px] ml-[7px]" />
      <DockItem><DocThumb /></DockItem>
      <DockItem><DocThumb word /></DockItem>
      <DockItem><Trash /></DockItem>
    </div>
  </div>
);

const MenuBar = () => (
  <div className="flex h-[25px] shrink-0 items-center bg-gradient-to-r from-[#1a3f72] via-[#1c2a66] to-[#20105c] text-[13px] text-white">
    <FaApple className="ml-[21px] h-[16px] w-[15px] text-[#eee]" />
    <nav className="ml-[21px] flex gap-[20px]">
      <span className="font-medium">Logicly</span>
      <span>File</span>
      <span>Edit</span>
      <span>View</span>
      <span>Tools</span>
      <span>Simulate</span>
      <span>Help</span>
    </nav>
    <div className="ml-auto flex items-center pr-[20px]">
      <MicOff className="mr-[23px] h-[14px] w-[14px] text-[#8f8f9f]" />
      <span className="relative mr-[19px] flex h-[16px] w-[17px] items-center">
        <span className="h-[14px] w-[12px] rounded-full bg-[conic-gradient(#fff_0deg,#fff_200deg,#20105c_200deg,#20105c_240deg,#fff_240deg)]" />
        <span className="absolute -right-[1px] text-[15px] leading-none font-extrabold">!</span>
      </span>
      <FaVolumeUp className="mr-[17px] h-[15px] w-[18px]" />
      <svg width="26" height="12" viewBox="0 0 26 12" className="mr-[18px]">
        <rect x=".5" y=".5" width="23" height="11" rx="3" fill="none" stroke="#b8b4cc" />
        <rect x="2" y="2" width="7" height="8" rx="1.500" fill="#fff" />
        <rect x="24.500" y="4" width="1.200" height="4" fill="#b8b4cc" />
      </svg>
      <Wifi className="mr-[18px] h-[17px] w-[17px]" />
      <CircleUser className="mr-[17px] h-[14px] w-[14px]" />
      <Search className="mr-[17px] h-[14px] w-[14px]" />
      <svg width="15" height="14" viewBox="0 0 15 14" className="mr-[17px]">
        <rect x=".5" y=".5" width="14" height="5.500" rx="2.700" fill="none" stroke="#fff" />
        <circle cx="3.500" cy="3.200" r="1.800" fill="#fff" />
        <rect x="0" y="7.500" width="15" height="6.500" rx="3.200" fill="#fff" />
        <circle cx="11.500" cy="10.700" r="1.800" fill="#20105c" />
      </svg>
      <span className="mr-[17px] h-[13px] w-[13px] rounded-full bg-[conic-gradient(#e0409c,#5a34d8,#20c0e0,#40d8a0,#e0409c)]" />
      <span className="whitespace-pre">Wed 8 Dec  16:33</span>
    </div>
  </div>
);

const TitleBar = () => (
  <div className="shrink-0 bg-[#1e1c5e]">
    <div className="relative flex h-[28px] items-center justify-center rounded-t-[8px] bg-gradient-to-r from-[#dcdcec] via-[#cdcbd0] to-[#cbc7d9]">
      <div className="absolute top-[8px] left-[8px] flex gap-[7.5px]">
        <span className="h-[12px] w-[12px] rounded-full bg-[#fc4346]" />
        <span className="h-[12px] w-[12px] rounded-full bg-[#fcb708]" />
        <span className="h-[12px] w-[12px] rounded-full bg-[#07cb2d]" />
      </div>
      <span className="text-[13px] font-semibold tracking-[0.15px] text-[#4a4a4a]">Logic.ly - Step-9.logicly *</span>
    </div>
  </div>
);

export default function App() {
  return (
    <div className="flex h-[900px] w-[1440px] flex-col overflow-hidden bg-black [font-family:Inter,sans-serif]">
      <MenuBar />
      <TitleBar />
      <Toolbar />
      <div className="flex h-[690px] shrink-0">
        <Sidebar />
        <Scrollbar />
        <CollapseGutter />
        <Canvas />
      </div>
      <BottomBar />
      <Dock />
    </div>
  );
}
